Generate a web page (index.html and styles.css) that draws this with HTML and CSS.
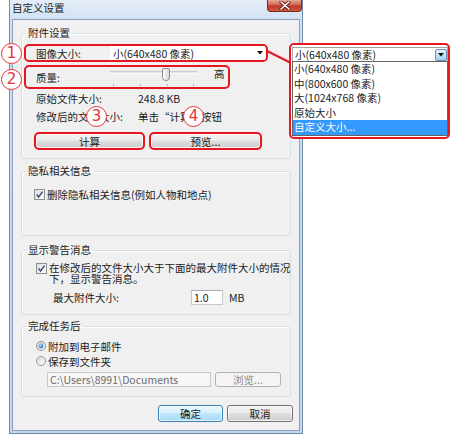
FILE: index.html
```html
<!DOCTYPE html>
<html lang="zh-CN">
<head>
<meta charset="utf-8">
<title>自定义设置</title>
<link rel="stylesheet" href="styles.css">
</head>
<body>
<div class="window">
  <div class="titlebar">
    <span class="title">自定义设置</span>
    <span class="close"><svg width="12" height="9" viewBox="0 0 12 9"><path d="M2 1 L10 8 M10 1 L2 8" stroke="#5a1a12" stroke-width="3.2" stroke-linecap="round"/><path d="M2 1 L10 8 M10 1 L2 8" stroke="#fff" stroke-width="1.6" stroke-linecap="round"/></svg></span>
  </div>
  <div class="client">
    <fieldset class="group">
      <legend>附件设置</legend>
      <div class="gbody g1">
        <div class="hl r-size">
          <span class="lbl">图像大小:</span>
          <span class="combo">小(640x480 像素)<svg class="caret" width="6" height="4" viewBox="0 0 6 4"><path d="M0 0 H6 L3 3.5 Z" fill="#111"/></svg></span>
        </div>
        <div class="hl r-quality">
          <span class="lbl">质量:</span>
          <svg class="slider" width="90" height="20" viewBox="0 0 90 20">
            <rect x="0" y="4.5" width="87" height="1" fill="#a7a7a7"/>
            <rect x="0" y="5.5" width="87" height="1" fill="#ffffff"/>
            <g stroke="#b0b0b0" stroke-width="1">
              <line x1="3.5" y1="17" x2="3.5" y2="19"/>
              <line x1="30.5" y1="17" x2="30.5" y2="19"/>
              <line x1="57.5" y1="17" x2="57.5" y2="19"/>
              <line x1="83.5" y1="17" x2="83.5" y2="19"/>
            </g>
            <defs><linearGradient id="th" x1="0" y1="0" x2="1" y2="0"><stop offset="0" stop-color="#ffffff"/><stop offset="1" stop-color="#d4d4d4"/></linearGradient></defs>
            <path d="M52.5 3 Q52.5 1.5 54 1.5 H58 Q59.5 1.5 59.5 3 V10.5 Q59.5 13.5 56 13.5 Q52.5 13.5 52.5 10.5 Z" fill="url(#th)" stroke="#8c8c8c"/>
          </svg>
          <span class="high">高</span>
        </div>
        <div class="info"><span class="lbl2">原始文件大小:</span><span>248.8 KB</span></div>
        <div class="info"><span class="lbl2">修改后的文件大小:</span><span>单击“计算”按钮</span></div>
        <div class="btnrow">
          <button class="btn btn-red w-calc">计算</button>
          <button class="btn btn-red w-prev">预览...</button>
        </div>
      </div>
    </fieldset>

    <fieldset class="group mt5">
      <legend>隐私相关信息</legend>
      <div class="gbody g2">
        <label class="check">
          <svg class="cb" width="11" height="11" viewBox="0 0 11 11"><defs><linearGradient id="cbg" x1="0" y1="0" x2="1" y2="1"><stop offset="0" stop-color="#dcdcdc"/><stop offset="1" stop-color="#ffffff"/></linearGradient></defs><rect x="0.5" y="0.5" width="10" height="10" fill="url(#cbg)" stroke="#8e8f8f"/><path d="M2.6 5.6 L4.6 8 L8.6 2.6" fill="none" stroke="#3a4f80" stroke-width="1.5"/></svg>
          <span>删除隐私相关信息(例如人物和地点)</span>
        </label>
      </div>
    </fieldset>

    <fieldset class="group mt7">
      <legend>显示警告消息</legend>
      <div class="gbody g3">
        <label class="check top">
          <svg class="cb" width="11" height="11" viewBox="0 0 11 11"><rect x="0.5" y="0.5" width="10" height="10" fill="url(#cbg)" stroke="#8e8f8f"/><path d="M2.6 5.6 L4.6 8 L8.6 2.6" fill="none" stroke="#3a4f80" stroke-width="1.5"/></svg>
          <span class="two">在修改后的文件大小大于下面的最大附件大小的情况<br>下，显示警告消息。</span>
        </label>
        <div class="maxrow">
          <span class="lbl3">最大附件大小:</span>
          <span class="field f-size">1.0</span>
          <span class="unit">MB</span>
        </div>
      </div>
    </fieldset>

    <fieldset class="group mt4">
      <legend>完成任务后</legend>
      <div class="gbody g4">
        <label class="radio">
          <svg width="10" height="10" viewBox="0 0 10 10"><defs><radialGradient id="dot" cx="0.4" cy="0.35" r="0.7"><stop offset="0" stop-color="#a8dcff"/><stop offset="1" stop-color="#1a64b8"/></radialGradient><linearGradient id="rbg" x1="0" y1="0" x2="1" y2="1"><stop offset="0" stop-color="#d4d4d4"/><stop offset="1" stop-color="#ffffff"/></linearGradient></defs><circle cx="5" cy="5" r="4.5" fill="url(#rbg)" stroke="#8e8f8f"/><circle cx="5" cy="5" r="2.4" fill="url(#dot)"/></svg>
          <span>附加到电子邮件</span>
        </label>
        <label class="radio r2">
          <svg width="10" height="10" viewBox="0 0 10 10"><circle cx="5" cy="5" r="4.5" fill="url(#rbg)" stroke="#9a9a9a"/></svg>
          <span>保存到文件夹</span>
        </label>
        <div class="pathrow">
          <span class="field f-path disabled">C:\Users\8991\Documents</span>
          <button class="btn btn-dis w-browse">浏览...</button>
        </div>
      </div>
    </fieldset>

    <div class="footer">
      <button class="btn btn-ok w-ok">确定</button>
      <button class="btn w-cancel">取消</button>
    </div>
  </div>
</div>

<svg class="connector" width="26" height="17" viewBox="0 0 26 17"><line x1="1" y1="2" x2="25" y2="14" stroke="#e8161f" stroke-width="2"/></svg>

<div class="dropdown">
  <div class="dd-combo">
    <span>小(640x480 像素)</span>
    <span class="dd-btn"><svg width="6" height="4" viewBox="0 0 6 4"><path d="M0 0 H6 L3 3.5 Z" fill="#111"/></svg></span>
  </div>
  <ul class="dd-list">
    <li>小(640x480 像素)</li>
    <li>中(800x600 像素)</li>
    <li>大(1024x768 像素)</li>
    <li>原始大小</li>
    <li class="sel">自定义大小...</li>
  </ul>
</div>

<span class="num n1">1</span>
<span class="num n2">2</span>
<span class="num n3">3</span>
<span class="num n4">4</span>
</body>
</html>
```

FILE: styles.css
```css
html, body {
  margin: 0;
  padding: 0;
}
body {
  width: 450px;
  height: 435px;
  overflow: hidden;
  position: relative;
  background: #ffffff;
  font-family: "Noto Sans CJK SC", "Noto Sans", sans-serif;
  font-size: 10.5px;
  color: #1b1b1b;
}

/* window frame */
.window {
  margin-left: 9px;
  width: 294px;
  height: 434px;
  box-sizing: border-box;
  border: 1px solid #6f8bae;
  border-top: 0;
  background: linear-gradient(180deg, #e4edf7 0px, #d3e2f2 19px, #c8daee 200px, #c3d6ec 100%);
  display: flex;
  flex-direction: column;
}
.titlebar {
  height: 19px;
  flex-shrink: 0;
  display: flex;
  align-items: flex-start;
}
.title {
  padding-left: 2px;
  line-height: 16px;
  color: #1a1a1a;
}
.close {
  margin-left: auto;
  width: 35px;
  height: 12px;
  box-sizing: border-box;
  border: 1px solid #7a2a20;
  border-top: 0;
  border-radius: 0 0 4px 4px;
  background: linear-gradient(180deg, #e9a99b 0%, #d26a59 40%, #c0392b 55%, #cf5a3e 100%);
  display: flex;
  align-items: center;
  justify-content: center;
}
.client {
  flex: 1;
  margin: 0 2px 2px;
  border: 1px solid #8aa0bc;
  background: #f0f0f0;
  display: flex;
  flex-direction: column;
}

/* group boxes */
.group {
  margin: 6px 0 0 8px;
  padding: 0;
  width: 270px;
  min-width: 0;
  box-sizing: border-box;
  border: 1px solid #d5dfe5;
  border-radius: 3px;
  box-shadow: inset 1px 1px 0 #ffffff;
}
.group.mt5 { margin-top: 5px; }
.group.mt7 { margin-top: 7px; }
.group.mt4 { margin-top: 4px; }
legend {
  padding: 0 2px;
  margin-left: 4px;
  line-height: 14px;
}
.gbody { display: flex; flex-direction: column; }
.g1 { padding: 4px 0 8px 2px; }
.g2 { padding: 9px 0 34px 12px; }
.g3 { padding: 6px 0 9px 14px; }
.g4 { padding: 6px 0 9px 14px; }

/* highlighted (annotated) rows */
.hl {
  box-sizing: border-box;
  border: 2px solid #e8161f;
  border-radius: 5px;
  display: flex;
  align-items: center;
  padding-left: 10px;
}
.r-size { width: 244px; height: 18px; }
.r-quality { width: 206px; height: 24px; margin-top: 3px; }
.lbl { width: 74px; flex-shrink: 0; }
.combo {
  width: 155px;
  height: 14px;
  box-sizing: border-box;
  background: #ffffff;
  padding-left: 3px;
  display: flex;
  align-items: center;
}
.caret { margin-left: auto; margin-right: 2px; }
.slider { flex-shrink: 0; display: block; }
.high {
  align-self: flex-start;
  line-height: 14px;
  margin-left: 14px;
}
.info {
  height: 18px;
  display: flex;
  align-items: center;
  padding-left: 12px;
}
.lbl2 { width: 102px; flex-shrink: 0; }
.btnrow {
  display: flex;
  gap: 4px;
  margin: 7px 0 0 10px;
}

/* buttons */
.btn {
  box-sizing: border-box;
  font: inherit;
  color: #1b1b1b;
  padding: 0;
  margin: 0;
  height: 17px;
  border: 1px solid #707070;
  border-radius: 3px;
  background: linear-gradient(180deg, #f2f2f2 0%, #ebebeb 45%, #dddddd 50%, #cfcfcf 100%);
  box-shadow: inset 0 0 0 1px rgba(255, 255, 255, 0.7);
  display: flex;
  align-items: center;
  justify-content: center;
}
.btn-red {
  height: 18px;
  border: 2px solid #e8161f;
  border-radius: 5px;
}
.w-calc { width: 111px; }
.w-prev { width: 113px; }
.btn-ok {
  border-color: #3c7fb1;
  background: linear-gradient(180deg, #eaf6fd 0%, #d9f0fc 45%, #bee6fd 50%, #a7d9f5 100%);
}
.btn-dis {
  height: 15px;
  border-color: #adb2b5;
  background: #f4f4f4;
  color: #8a8a8a;
  box-shadow: none;
}
.w-browse { width: 66px; }
.w-ok { width: 65px; }
.w-cancel { width: 66px; }

/* check boxes and radios */
.check {
  display: flex;
  align-items: center;
  height: 14px;
}
.check.top {
  align-items: flex-start;
  height: auto;
}
.check .cb { flex-shrink: 0; margin-right: 2px; display: block; }
.check.top .cb { margin-top: 0; }
.two {
  line-height: 10.5px;
  white-space: nowrap;
}
.maxrow {
  display: flex;
  align-items: center;
  height: 15px;
  margin-top: 6px;
  padding-left: 17px;
}
.lbl3 { width: 138px; flex-shrink: 0; }
.field {
  box-sizing: border-box;
  height: 15px;
  background: #ffffff;
  border: 1px solid #c5c8cc;
  border-top-color: #abadb3;
  padding-left: 2px;
  display: flex;
  align-items: center;
}
.f-size { width: 32px; }
.unit { margin-left: 6px; }
.radio {
  display: flex;
  align-items: center;
  height: 14px;
}
.radio svg { display: block; margin-right: 2px; flex-shrink: 0; }
.radio.r2 { margin-top: 1px; }
.pathrow {
  display: flex;
  gap: 4px;
  margin: 4px 0 0 11px;
}
.f-path {
  width: 164px;
  color: #6d6d6d;
}
.field.disabled {
  background: #f6f6f6;
  border-color: #c9c9c9;
}

.footer {
  display: flex;
  justify-content: flex-end;
  gap: 4px;
  margin-top: 8px;
  padding-right: 6px;
}

/* annotations over the screenshot */
.connector {
  position: absolute;
  left: 266px;
  top: 49px;
}
.dropdown {
  position: absolute;
  left: 289px;
  top: 43px;
  width: 161px;
  box-sizing: border-box;
  border: 2px solid #e8161f;
  border-radius: 5px;
  background: #ffffff;
  padding: 2px 0 1px 1px;
}
.dd-combo {
  height: 14px;
  box-sizing: border-box;
  border: 1px solid #a3a3a3;
  border-bottom: 0;
  display: flex;
  align-items: center;
  padding-left: 2px;
}
.dd-btn {
  margin-left: auto;
  width: 12px;
  height: 12px;
  box-sizing: border-box;
  border: 1px solid #6a90b8;
  border-radius: 2px;
  background: linear-gradient(180deg, #e3f2fc 0%, #c4e3f8 50%, #9fcff1 100%);
  display: flex;
  align-items: center;
  justify-content: center;
}
.dd-list {
  list-style: none;
  margin: 0;
  padding: 0;
  border: 1px solid #646464;
}
.dd-list li {
  line-height: 14.5px;
  height: 14.5px;
  padding-left: 1px;
}
.dd-list li.sel {
  background: #3399ff;
  color: #ffffff;
}

.num {
  position: absolute;
  width: 21px;
  height: 21px;
  box-sizing: border-box;
  border: 1.5px solid #e5323b;
  border-radius: 50%;
  background: #ffffff;
  color: #e5323b;
  font-family: "DejaVu Sans", sans-serif;
  font-size: 15px;
  line-height: 1;
  display: flex;
  align-items: center;
  justify-content: center;
}
.n1 { left: 1px; top: 43px; }
.n2 { left: 1px; top: 69px; }
.n3 { left: 86px; top: 106px; }
.n4 { left: 183px; top: 106px; }
```
